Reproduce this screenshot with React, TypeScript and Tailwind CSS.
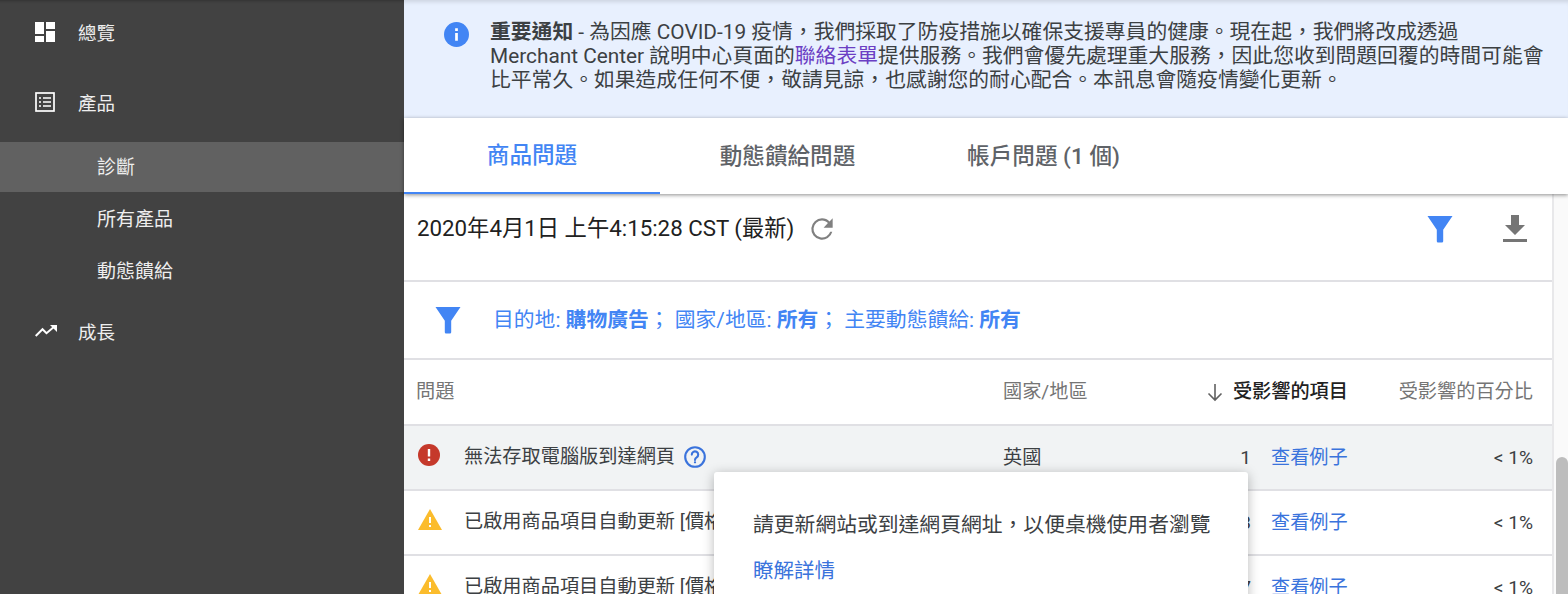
import React from "react";

const FilterIcon = ({ className }: { className: string }) => (
  <svg viewBox="0 0 26 28" className={className} fill="currentColor">
    <path d="M0.5 1h25L16.2 14.8V26c0 .9-.7 1.6-1.6 1.6h-3.2c-.9 0-1.6-.7-1.6-1.6V14.8z" />
  </svg>
);

const SideItem = ({ icon, label, className }: { icon: React.ReactNode; label: string; className: string }) => (
  <div className={`flex items-center pl-[35px] ${className}`}>
    <div className="mb-[2px] w-[43px] shrink-0">{icon}</div>
    <span className="pt-[4px] text-[18.5px] text-[#eeeeee]">{label}</span>
  </div>
);

const SubItem = ({ label, active }: { label: string; active?: boolean }) => (
  <div className={`flex h-[50px] items-center pl-[97px] pt-[2px] text-[19px] text-[#eeeeee] ${active ? "bg-[#616161]" : ""}`}>
    {label}
  </div>
);

const Warning = () => (
  <svg viewBox="0 0 24 21" className="h-[21px] w-[24px]">
    <path d="M12 0 24 21H0z" fill="#fbbc2c" />
    <path d="M11 8h2v6h-2zM11 16h2v2h-2z" fill="#fff" />
  </svg>
);

const ErrorIcon = () => (
  <svg viewBox="0 0 22 22" className="h-[22px] w-[22px]">
    <circle cx="11" cy="11" r="11" fill="#c5392b" />
    <path d="M9.8 5h2.4v7.5H9.8zM9.8 14.5h2.4V17H9.8z" fill="#fff" />
  </svg>
);

const Row = ({ icon, title, tint, count, help }: { icon: React.ReactNode; title: string; tint?: boolean; count: string; help?: boolean }) => (
  <div className={`flex h-[65px] shrink-0 items-center border-b-2 border-[#e0e0e4] pt-[2px] text-[19.2px] text-[#3c4043] ${tint ? "bg-[#f1f3f4]" : "bg-white"}`}>
    <div className="mb-[8px] w-[60px] shrink-0 pl-[14px]">{icon}</div>
    <div className="mb-[3px] flex w-[539px] shrink-0 items-center gap-[8px]">
      <span className="whitespace-nowrap">{title}</span>
      {help && (
        <svg viewBox="0 0 24 24" className="h-[24px] w-[24px]" fill="none" stroke="#3a73dc" strokeWidth="2.1">
          <circle cx="12" cy="12" r="9.8" />
          <path d="M8.8 9.6a3.2 3.2 0 1 1 4.9 2.7c-1.1.7-1.7 1.3-1.7 2.6" strokeLinecap="round" />
          <path d="M12 16.4v1.8" />
        </svg>
      )}
    </div>
    <div className="w-[100px] shrink-0">{tint ? "英國" : ""}</div>
    <div className="w-[148px] shrink-0 text-right">{count}</div>
    <div className="ml-[20px] w-[90px] shrink-0 text-[#3a73dc]">查看例子</div>
    <div className="w-[172px] shrink-0 text-right">&lt; 1%</div>
  </div>
);

export default function App() {
  return (
    <div className="flex h-[594px] w-[1568px] overflow-hidden bg-white font-['Roboto','Noto_Sans_CJK_TC',sans-serif]">
      {/* sidebar */}
      <aside className="w-[404px] shrink-0 bg-[#424242] pt-[3px] shadow-[inset_0_4px_3px_-3px_rgba(0,0,0,0.25)]">
        <SideItem
          className="h-[60px]"
          label="總覽"
          icon={
            <svg viewBox="0 0 20 20" className="h-[20px] w-[20px]" fill="#fff">
              <path d="M0 0h9v12H0zM11 0h9v7h-9zM0 14h9v6H0zM11 9h9v11h-9z" />
            </svg>
          }
        />
        <SideItem
          className="mt-[10px] h-[60px]"
          label="產品"
          icon={
            <svg viewBox="0 0 20 20" className="h-[20px] w-[20px]" fill="none" stroke="#fff" strokeWidth="1.7">
              <rect x="1" y="1" width="18" height="18" />
              <path d="M4 6h2M8 6h8M4 10h2M8 10h8M4 14h2M8 14h8" />
            </svg>
          }
        />
        <div className="mt-[9px]">
          <SubItem label="診斷" active />
        </div>
        <div className="mt-[2px]">
          <SubItem label="所有產品" />
        </div>
        <div className="mt-[2px]">
          <SubItem label="動態饋給" />
        </div>
        <SideItem
          className="mt-[6px] h-[60px]"
          label="成長"
          icon={
            <svg viewBox="0 0 22 12" className="h-[12px] w-[22px]" fill="none" stroke="#fff" strokeWidth="2">
              <path d="M0.7 11 7.5 4.2l4 4L20 1" />
              <path d="M15 0h7v7z" fill="#fff" stroke="none" />
            </svg>
          }
        />
      </aside>

      {/* main */}
      <main className="relative min-w-0 flex-1">
        <div className="flex h-[118px] bg-[#e8f0fe] pl-[40px] pr-[8px] pt-[20px] shadow-[inset_0_5px_4px_-3px_rgba(0,0,0,0.12)]">
          <svg viewBox="0 0 24 24" className="mt-[2px] h-[25px] w-[25px] shrink-0">
            <circle cx="12" cy="12" r="12" fill="#4285f4" />
            <path d="M10.7 10.5h2.6V18h-2.6zM10.7 6h2.6v2.6h-2.6z" fill="#fff" />
          </svg>
          <p className="ml-[21px] whitespace-nowrap text-[20.8px] leading-[24px] text-[#3c4043]">
            <b className="font-bold">重要通知</b> - 為因應 COVID-19 疫情，我們採取了防疫措施以確保支援專員的健康。現在起，我們將改成透過
            <br />
            Merchant Center 說明中心頁面的
            <span className="text-[#6b3fc4]">聯絡表單</span>
            提供服務。我們會優先處理重大服務，因此您收到問題回覆的時間可能會
            <br />
            比平常久。如果造成任何不便，敬請見諒，也感謝您的耐心配合。本訊息會隨疫情變化更新。
          </p>
        </div>

        <div className="relative z-10 flex h-[76px] bg-white text-[22.6px] font-medium text-[#5f6368] shadow-[0_1px_4px_rgba(0,0,0,0.45)]">
          <div className="flex w-[256px] items-center justify-center border-b-2 border-[#4285f4] pt-[2px] text-[#4285f4]">商品問題</div>
          <div className="flex w-[255px] items-center justify-center pt-[2px]">動態饋給問題</div>
          <div className="flex w-[257px] items-center justify-center pt-[2px]">帳戶問題 (1 個)</div>
        </div>

        <div className="flex">
          <div className="w-[1150px] shrink-0 border-r-2 border-[#e8e8ea]">
            <div className="flex h-[88px] items-center border-b-2 border-[#e0e0e4] pb-[17px] pl-[13px]">
              <span className="text-[22.3px] text-[#212121]">2020年4月1日 上午4:15:28 CST (最新)</span>
              <svg viewBox="0 0 24 24" className="ml-[12px] h-[32px] w-[32px]" fill="#808080">
                <path d="M17.65 6.35A7.96 7.96 0 0 0 12 4a8 8 0 1 0 7.73 10h-1.6A6.4 6.4 0 1 1 12 5.6c1.76 0 3.3.72 4.45 1.95L13.2 11H20V4z" />
              </svg>
              <div className="ml-auto flex items-center gap-[50px] pr-[25px]">
                <FilterIcon className="h-[28px] w-[26px] text-[#4285f4]" />
                <svg viewBox="0 0 24 28" className="h-[28px] w-[24px]" fill="#757575">
                  <path d="M8 0h8v10h6L12 20 2 10h6zM0 24h24v3H0z" />
                </svg>
              </div>
            </div>
            <div className="flex h-[78px] items-center border-b-2 border-[#e0e0e4] pl-[31px] text-[20.8px] text-[#4285f4]">
              <FilterIcon className="h-[28px] w-[26px]" />
              <span className="ml-[32px] pt-[2px]">
                目的地: <b className="font-bold">購物廣告</b>； 國家/地區: <b className="font-bold">所有</b>； 主要動態饋給: <b className="font-bold">所有</b>
              </span>
            </div>
            <div className="flex h-[66px] items-center border-b-2 border-[#e0e0e4] text-[19.2px] text-[#757575]">
              <span className="w-[599px] shrink-0 pl-[12px]">問題</span>
              <span className="w-[100px] shrink-0">國家/地區</span>
              <span className="flex w-[245px] shrink-0 items-center justify-end font-medium text-[#212121]">
                <svg viewBox="0 0 20 20" className="mr-[8px] h-[20px] w-[20px]" fill="none" stroke="#616161" strokeWidth="1.6">
                  <path d="M10 2v16M3.5 11.5 10 18l6.5-6.5" />
                </svg>
                受影響的項目
              </span>
              <span className="w-[185px] shrink-0 text-right">受影響的百分比</span>
            </div>
            <Row icon={<ErrorIcon />} title="無法存取電腦版到達網頁" tint count="1" help />
            <Row icon={<Warning />} title="已啟用商品項目自動更新 [價格]" count="3" />
            <Row icon={<Warning />} title="已啟用商品項目自動更新 [價格]" count="7" />
          </div>
          <div className="relative flex-1 bg-[#fafafa]">
            <div className="absolute bottom-0 left-[2px] top-[263px] w-[12px] rounded-t-md bg-[#bdbdbd]" />
          </div>
        </div>

        <div className="absolute left-[310px] top-[472px] z-20 h-[140px] w-[534px] rounded-[3px] bg-white pl-[39px] pt-[40px] shadow-[0_2px_12px_rgba(0,0,0,0.28)]">
          <p className="whitespace-nowrap text-[20.8px] leading-[26px] text-[#3c4043]">請更新網站或到達網頁網址，以便桌機使用者瀏覽</p>
          <p className="mt-[20px] text-[20.5px] leading-[26px] text-[#3a73dc]">瞭解詳情</p>
        </div>
      </main>
    </div>
  );
}
